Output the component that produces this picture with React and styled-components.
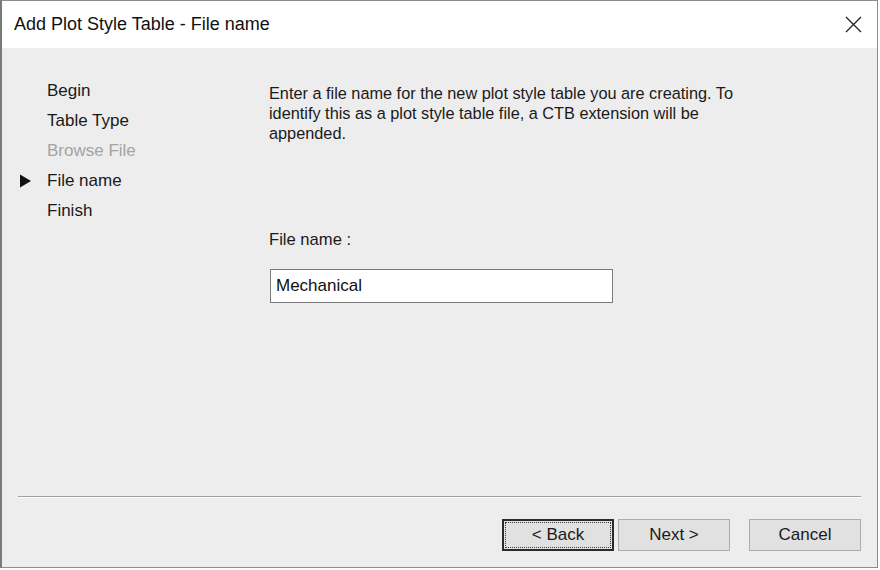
import styled, { createGlobalStyle } from 'styled-components';

const GlobalStyle = createGlobalStyle`
  html, body {
    margin: 0;
    padding: 0;
    background: #ffffff;
  }
  * {
    box-sizing: border-box;
  }
`;

const Window = styled.div`
  width: 878px;
  height: 568px;
  display: flex;
  flex-direction: column;
  border: 1px solid #8c8c8c;
  border-left: 2px solid #7a7a7a;
  background: #ededed;
  font-family: 'Liberation Sans', Arial, sans-serif;
  color: #1a1a1a;
`;

const TitleBar = styled.div`
  height: 47px;
  display: flex;
  align-items: center;
  justify-content: space-between;
  padding: 0 14px 0 12px;
  background: #ffffff;
`;

const Title = styled.span`
  font-size: 18px;
  color: #111;
`;

const CloseButton = styled.button`
  width: 20px;
  height: 20px;
  padding: 0;
  border: none;
  background: transparent;
  display: flex;
  align-items: center;
  justify-content: center;
`;

const Body = styled.div`
  flex: 1;
  display: flex;
  flex-direction: column;
`;

const Main = styled.div`
  height: 448px;
  display: flex;
`;

const Nav = styled.ul`
  width: 265px;
  margin: 0;
  padding: 28px 0 0 16px;
  list-style: none;
`;

const NavItem = styled.li`
  height: 30px;
  display: flex;
  align-items: center;
  font-size: 17px;
  color: ${(props) => (props.disabled ? '#a3a3a3' : '#1a1a1a')};
`;

const Marker = styled.span`
  width: 29px;
  display: flex;
  align-items: center;
`;

const Content = styled.div`
  flex: 1;
  padding: 35px 0 0 2px;
`;

const Intro = styled.p`
  margin: 0;
  font-size: 16.3px;
  line-height: 20px;
`;

const Label = styled.div`
  margin-top: 87px;
  font-size: 16.6px;
  line-height: 20px;
`;

const NameInput = styled.input`
  display: block;
  width: 343px;
  height: 34px;
  margin: 19px 0 0 1px;
  padding: 0 5px;
  border: 1px solid #7a7a7a;
  background: #ffffff;
  font-family: 'Liberation Sans', Arial, sans-serif;
  font-size: 17px;
  color: #111;
  outline: none;
`;

const Separator = styled.div`
  margin: 0 16px;
  height: 2px;
  border-top: 1px solid #a0a0a0;
  border-bottom: 1px solid #ffffff;
`;

const ButtonRow = styled.div`
  display: flex;
  justify-content: flex-end;
  padding: 21px 16px 0 0;
`;

const Button = styled.button`
  width: 112px;
  height: 32px;
  margin-left: ${(props) => props.gap || 0}px;
  padding: 0;
  font-family: 'Liberation Sans', Arial, sans-serif;
  font-size: 17px;
  color: #1a1a1a;
  background: #e1e1e1;
  border: ${(props) => (props.primary ? '2px solid #2b2b2b' : '1px solid #adadad')};
  outline: ${(props) => (props.primary ? '1px dotted #3a3a3a' : 'none')};
  outline-offset: -4px;
`;

const steps = [
  { label: 'Begin' },
  { label: 'Table Type' },
  { label: 'Browse File', disabled: true },
  { label: 'File name', current: true },
  { label: 'Finish' },
];

export default function App() {
  return (
    <>
      <GlobalStyle />
      <Window>
        <TitleBar>
          <Title>Add Plot Style Table - File name</Title>
          <CloseButton aria-label="Close">
            <svg width="17" height="17" viewBox="0 0 17 17">
              <path d="M1 1 L16 16 M16 1 L1 16" stroke="#222" strokeWidth="1.3" fill="none" />
            </svg>
          </CloseButton>
        </TitleBar>
        <Body>
          <Main>
            <Nav>
              {steps.map((step) => (
                <NavItem key={step.label} disabled={step.disabled}>
                  <Marker>
                    {step.current && (
                      <svg width="14" height="14" viewBox="0 0 14 14">
                        <path d="M2 0.5 L13 7 L2 13.5 Z" fill="#111" />
                      </svg>
                    )}
                  </Marker>
                  {step.label}
                </NavItem>
              ))}
            </Nav>
            <Content>
              <Intro>
                Enter a file name for the new plot style table you are creating. To
                <br />
                identify this as a plot style table file, a CTB extension will be
                <br />
                appended.
              </Intro>
              <Label>File name :</Label>
              <NameInput defaultValue="Mechanical" />
            </Content>
          </Main>
          <Separator />
          <ButtonRow>
            <Button primary>&lt; Back</Button>
            <Button gap={4}>Next &gt;</Button>
            <Button gap={19}>Cancel</Button>
          </ButtonRow>
        </Body>
      </Window>
    </>
  );
}
